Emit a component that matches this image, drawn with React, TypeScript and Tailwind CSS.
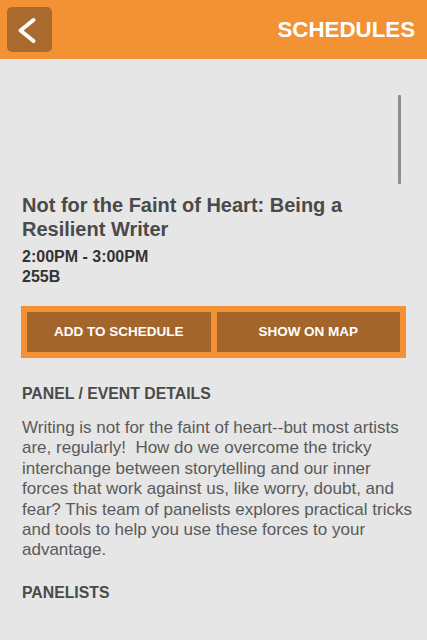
import React from "react";

export default function App() {
  return (
    <div className="w-[427px] h-[640px] overflow-hidden bg-[#e6e6e6] relative" style={{ fontFamily: '"Liberation Sans", Arial, sans-serif' }}>
      <div className="h-[59px] bg-[#f39234] flex items-center justify-between pl-[7px] pr-[12px]">
        <div className="w-[45px] h-[45px] rounded-[5px] bg-[#a96a2d]">
          <svg width="45" height="45" viewBox="0 0 45 45" fill="none">
            <path d="M26.5 13 L13.5 23.5 L26.5 34" stroke="white" strokeWidth="4" strokeLinecap="round" strokeLinejoin="round" />
          </svg>
        </div>
        <div className="text-white font-bold text-[22.3px] leading-[26px]">SCHEDULES</div>
      </div>
      <div className="absolute left-[398px] top-[95px] w-[3px] h-[89px] bg-[#8e8e8e] rounded-[1px]" />
      <div className="px-[22px] pt-[134px]">
        <div className="text-[#4a4a4a] font-bold text-[20px] leading-[24px]">
          Not for the Faint of Heart: Being a<br />Resilient Writer
        </div>
        <div className="mt-[6px] text-[#333333] font-bold text-[16px] leading-[20px]">2:00PM - 3:00PM</div>
        <div className="text-[#333333] font-bold text-[16px] leading-[19px]">255B</div>
        <div className="mt-[20px] -ml-[1px] w-[385px] h-[52px] bg-[#f39234] p-[6px] flex gap-[6px]">
          <div className="flex-1 bg-[#a4652b] flex items-center justify-center text-white font-bold text-[13.5px]">ADD TO SCHEDULE</div>
          <div className="flex-1 bg-[#a4652b] flex items-center justify-center text-white font-bold text-[13.5px]">SHOW ON MAP</div>
        </div>
        <div className="mt-[27px] text-[#4a4a4a] font-bold text-[15.8px] leading-[18px]">PANEL / EVENT DETAILS</div>
        <div className="mt-[15px] text-[#5a5a5a] text-[17px] leading-[20.4px] whitespace-nowrap">
          Writing is not for the faint of heart--but most artists<br />
          are, regularly!&nbsp; How do we overcome the tricky<br />
          interchange between storytelling and our inner<br />
          forces that work against us, like worry, doubt, and<br />
          fear? This team of panelists explores practical tricks<br />
          and tools to help you use these forces to your<br />
          advantage.
        </div>
        <div className="mt-[23px] text-[#4a4a4a] font-bold text-[15.8px] leading-[18px]">PANELISTS</div>
      </div>
    </div>
  );
}
